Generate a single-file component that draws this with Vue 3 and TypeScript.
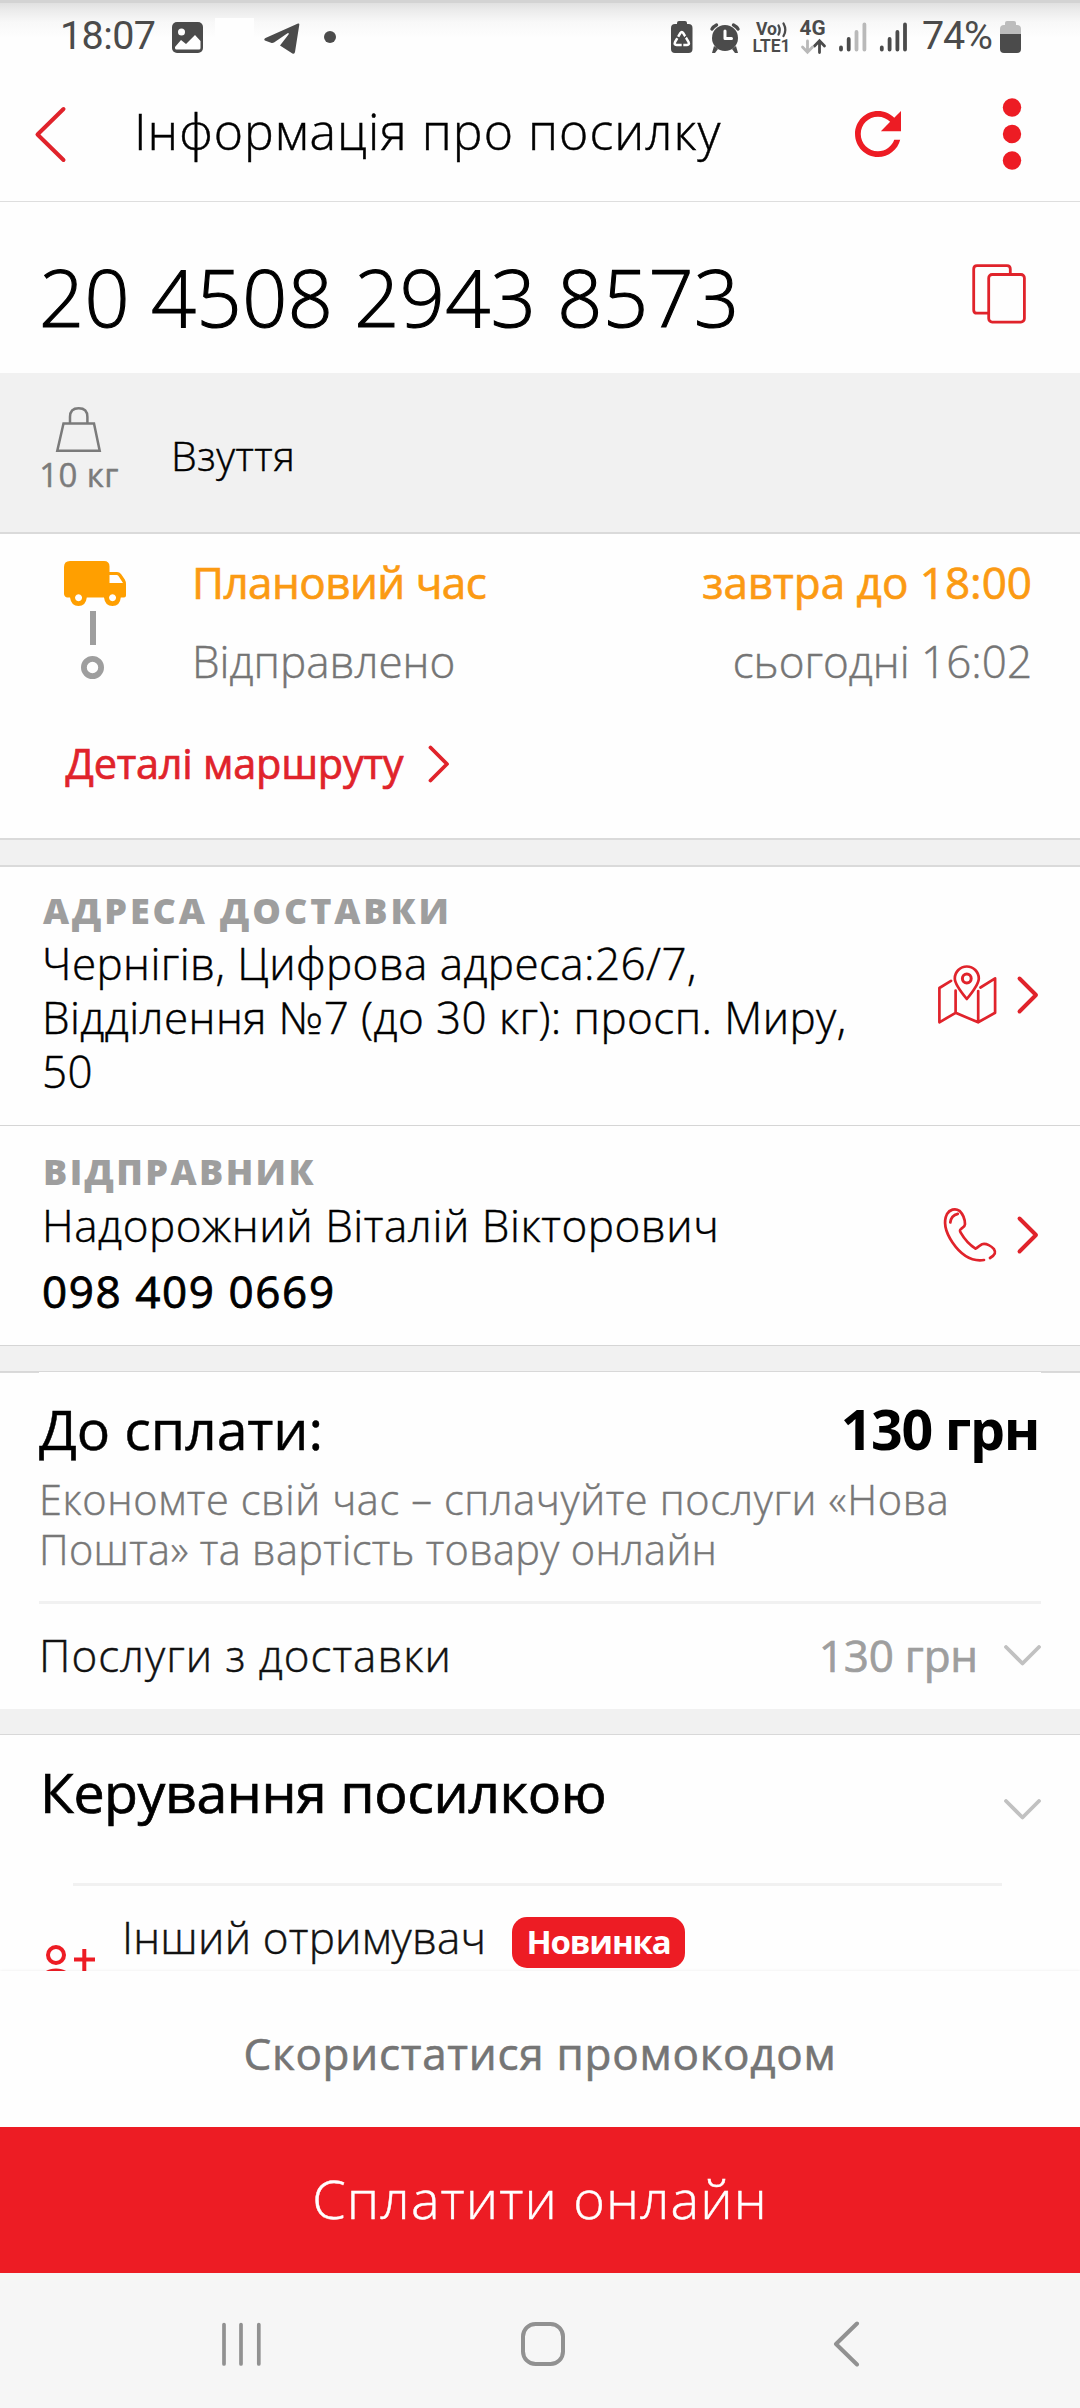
<script setup lang="ts">
interface Party {
  label: string
  lines: string[]
  phone?: string
  kind: 'address' | 'sender'
}

const parcelNumber = '20 4508 2943 8573'

const parties: Party[] = [
  {
    label: 'АДРЕСА ДОСТАВКИ',
    lines: ['Чернігів, Цифрова адреса:26/7,', 'Відділення №7 (до 30 кг): просп. Миру,', '50'],
    kind: 'address',
  },
  {
    label: 'ВІДПРАВНИК',
    lines: ['Надорожний Віталій Вікторович'],
    phone: '098 409 0669',
    kind: 'sender',
  },
]
</script>

<template>
  <div class="screen">
    <div class="status">
      <div class="status-left">
        <span class="clock">18:07</span>
        <svg class="s-gallery" width="32" height="36" viewBox="172 20 32 36">
          <rect x="172" y="22" width="31" height="31" rx="5" fill="#4b4b4b" />
          <circle cx="181.500" cy="32" r="3.500" fill="#fff" />
          <path d="M175 47l6-7 5 4 9-9 5.500 6v7q0 1.500-1.500 1.500H176.500q-1.500 0-1.500-1.500z" fill="#fff" />
        </svg>
        <span class="blank"></span>
        <svg class="s-plane" width="36" height="36" viewBox="264 20 36 36">
          <path d="M298 23.500q1.500-.5 1.300 1.300L295 52q-.5 2.500-2.600 1.400L280 45.500l8.500-11q.8-2-1-1.200L274 42.500q-1.500.8-3 .3l-5.500-2q-2.500-1.200 0-2.700z" fill="#4b4b4b" />
        </svg>
        <svg class="s-dot" width="12" height="36" viewBox="324 20 12 36"><circle cx="330" cy="37" r="6" fill="#4b4b4b" /></svg>
      </div>
      <div class="status-right">
        <svg width="236" height="40" viewBox="671 18 236 40">
          <g fill="#4b4b4b">
            <path d="M677 24V23q0-2 2-2h6q2 0 2 2v1h1.500q4 0 4 4v21q0 4-4 4h-13.500q-4 0-4-4V28q0-4 4-4z" />
            <circle cx="725" cy="38" r="13" />
            <path d="M714 46l4 3-3 4h-3zM736 46l-4 3 3 4h3z" />
          </g>
          <path d="M680.300 33.200q1.500-2.400 3 0l5.300 9q1.200 2.600-1.600 2.800h-10.400q-2.800-.2-1.600-2.800z" fill="none" stroke="#fff" stroke-width="2.500" />
          <path d="M676 36.500l4.500 2.500M687 35.500l-3.500 3.500M682.500 42v5.500" stroke="#4b4b4b" stroke-width="1.600" />
          <path d="M725 31v7.500h6.500" fill="none" stroke="#fff" stroke-width="3" stroke-linecap="round" stroke-linejoin="round" />
          <g fill="none" stroke="#4b4b4b" stroke-width="3.400" stroke-linecap="round">
            <path d="M712 29q1.500-2.500 4.500-4M738 29q-1.500-2.500-4.500-4" />
            <path d="M778.500 25.500q2.400 4.500 0 9M783.500 23.500q3.600 6.500 0 12.500" stroke-width="2.300" />
            <path d="M819.500 52.500V41M814.500 46l5-5.200 5 5.200" stroke-width="2.800" />
            <path d="M807.500 41v10.500M802.500 47l5 5.200 5-5.200" stroke="#b9b9b9" stroke-width="2.800" />
          </g>
          <g font-family="Roboto, sans-serif" font-weight="700" fill="#4b4b4b">
            <text x="756" y="35" font-size="18.500" textLength="21" lengthAdjust="spacingAndGlyphs">Vo</text>
            <text x="752.500" y="52" font-size="17.500" font-weight="600" textLength="38" lengthAdjust="spacingAndGlyphs">LTE1</text>
            <text x="799.500" y="35" font-size="19.500" textLength="26" lengthAdjust="spacingAndGlyphs">4G</text>
          </g>
          <g stroke="#4b4b4b" stroke-width="3.800" stroke-linecap="round">
            <path d="M841 47.500v2M848.700 39v10.500" />
            <path d="M856.500 32v17.500M864.400 24.500v25" stroke="#b9b9b9" />
            <path d="M881.800 47.500v2M889.600 39v10.500M897.400 32v17.500M905 24.500v25" />
          </g>
        </svg>
        <span class="percent">74%</span>
        <svg class="s-batt" width="22" height="36" viewBox="1000 20 22 36">
          <path d="M1005 25v-2q0-2 2-2h7q2 0 2 2v2h1q4 0 4 4v5h-21v-5q0-4 4-4z" fill="#bdbdbd" />
          <path d="M1000 34h21v15q0 4-4 4h-13q-4 0-4-4z" fill="#4b4b4b" />
        </svg>
      </div>
    </div>

    <header class="header">
      <svg class="h-back" width="34" height="60" viewBox="33 105 34 60">
        <path d="M63.500 109L37.500 134.500L63.500 160" fill="none" stroke="#e0232b" stroke-width="4" stroke-linecap="round" stroke-linejoin="round" />
      </svg>
      <h1 class="title">Інформація про посилку</h1>
      <svg class="h-refresh" width="46" height="46" viewBox="4 4 16 16">
        <path fill="#ed1c24" d="M17.650 6.350C16.200 4.900 14.210 4 12 4c-4.420 0-7.990 3.580-7.990 8s3.570 8 7.990 8c3.730 0 6.840-2.550 7.730-6h-2.080c-.82 2.330-3.040 4-5.650 4-3.310 0-6-2.690-6-6s2.690-6 6-6c1.660 0 3.140.69 4.220 1.780L13 11h7V4l-2.350 2.350z" />
      </svg>
      <svg class="h-more" width="20" height="74" viewBox="1002 96.500 20 74">
        <g fill="#ed1c24"><circle cx="1012" cy="107" r="9.200" /><circle cx="1012" cy="133.500" r="9.200" /><circle cx="1012" cy="160" r="9.200" /></g>
      </svg>
    </header>

    <section class="number">
      <span class="number-text">{{ parcelNumber }}</span>
      <svg class="copy" width="56" height="64" viewBox="971 262 56 64">
        <g fill="none" stroke="#e0232b" stroke-width="2.800">
          <path d="M988 313.200h-11q-3.300 0-3.300-3.300V269q0-3.300 3.300-3.300h30q3.300 0 3.300 3.300v5" />
          <rect x="988.700" y="274.500" width="35.700" height="47.600" rx="3.500" />
        </g>
      </svg>
    </section>

    <section class="cargo">
      <div class="weight">
        <svg width="50" height="48" viewBox="54 406 50 48">
          <g fill="none" stroke="#7b7b7b" stroke-width="2.500">
            <path d="M63.500 423.500h30.500l5.700 27.300H57.300z" />
            <path d="M70 423v-6q0-8.700 8.700-8.700t8.700 8.700v6" />
          </g>
        </svg>
        <span class="weight-text">10 кг</span>
      </div>
      <span class="cargo-name">Взуття</span>
    </section>

    <section class="route">
      <div class="route-body">
        <svg class="track" width="64" height="122" viewBox="64 560 64 122">
          <path fill="#ff9f00" fill-rule="evenodd" d="M64 567q0-6 6-6h34q5.500 0 5.500 5.500V572h7.500q2.500 0 4 2l3.800 5.500q1.200 2 1.200 4.500v11.500q0 2-2 2h-3.200q-.8 8.500-8.300 8.500t-8.500-8.500H86.800q-1 8.500-8.300 8.500t-8.500-8.500H67q-3-1-3-4zM109.500 575v8h13.500l-4.500-7q-.7-1-2-1zM78.500 594.200a3.500 3.500 0 1 0 .1 0zM112.500 594.200a3.500 3.500 0 1 0 .1 0z" />
          <rect x="90" y="611" width="6" height="34" fill="#9e9e9e" />
          <circle cx="92.500" cy="667.500" r="8.600" fill="none" stroke="#9e9e9e" stroke-width="5.800" />
        </svg>
        <div class="route-rows">
          <div class="route-row plan">
            <span class="plan-l">Плановий час</span>
            <span class="plan-r">завтра до 18:00</span>
          </div>
          <div class="route-row sent">
            <span>Відправлено</span>
            <span>сьогодні 16:02</span>
          </div>
        </div>
      </div>
      <div class="details">
        <span>Деталі маршруту</span>
        <svg width="22" height="40" viewBox="428 744.500 22 40">
          <path d="M430.500 748L447 764.500L430.500 781" fill="none" stroke="#e0232b" stroke-width="3.800" stroke-linecap="round" stroke-linejoin="round" />
        </svg>
      </div>
    </section>

    <section v-for="p in parties" :key="p.kind" class="party" :class="p.kind">
      <div class="party-text">
        <div class="label">{{ p.label }}</div>
        <div class="party-lines">
          <div v-for="line in p.lines" :key="line">{{ line }}</div>
        </div>
        <div v-if="p.phone" class="phone">{{ p.phone }}</div>
      </div>
      <svg v-if="p.kind === 'address'" class="party-icon" width="62" height="62" viewBox="936 964 62 62">
        <g fill="none" stroke="#e0232b" stroke-width="2.700" stroke-linecap="round" stroke-linejoin="round">
          <path d="M951 980.800l-11.600 7.200v34.300l16.200-9.500 22.500 9.500 17-9.500v-34.500l-14.600 9.200M955.600 990.500v22M978.200 991v31" />
          <path d="M966.800 999q-12-14.500-12-20.500a12 12 0 0 1 24 0q0 6-12 20.500z" />
          <circle cx="966.800" cy="978.500" r="4.400" stroke-width="3" />
        </g>
      </svg>
      <svg v-else class="party-icon" width="62" height="62" viewBox="936 1204 62 62">
        <path d="M984 1260c-12 1.800-23-5-31.500-17.500c-7-10.500-9.500-20.500-5.500-28.500c2.500-4.200 8-6.300 12.500-3.200c3 3 5.500 8.500 5.500 13.500c0 2.500-2.500 3.500-4 4.700c-1.500 1-1.300 1.800-.3 3.600c4 7 8.500 12 14.800 16c2.500-.6 4-3.400 6.500-4.400c4.500-1.200 9.500 2 12 5c2 3 1.500 5.500-4 8.800M950.300 1222.500q.8-7 7.500-8.600" fill="none" stroke="#e0232b" stroke-width="2.700" stroke-linecap="round" stroke-linejoin="round" />
      </svg>
      <svg class="party-chev" width="24" height="62" viewBox="1016 963.500 24 62">
        <path d="M1019.500 978L1036 994.500L1019.500 1011" fill="none" stroke="#e0232b" stroke-width="3.900" stroke-linecap="round" stroke-linejoin="round" />
      </svg>
    </section>

    <section class="payment">
      <div class="pay-head">
        <span class="pay-title">До сплати:</span>
        <span class="pay-sum">130 грн</span>
      </div>
      <p class="pay-note"><span class="note-first">Економте свій час – сплачуйте послуги «Нова</span><br>Пошта» та вартість товару онлайн</p>
      <div class="rule"></div>
      <div class="pay-row">
        <span class="pay-service">Послуги з доставки</span>
        <span class="pay-price">130 грн</span>
        <svg width="37" height="22" viewBox="0 0 37 22"><path d="M2 2l16.500 16.500L35 2" fill="none" stroke="#c1c1c1" stroke-width="3.800" stroke-linecap="round" stroke-linejoin="round" /></svg>
      </div>
    </section>

    <section class="manage">
      <div class="manage-head">
        <span class="manage-title">Керування посилкою</span>
        <svg width="37" height="22" viewBox="0 0 37 22"><path d="M2 2l16.500 16.500L35 2" fill="none" stroke="#c1c1c1" stroke-width="3.800" stroke-linecap="round" stroke-linejoin="round" /></svg>
      </div>
      <div class="manage-rule"></div>
      <div class="manage-row">
        <svg class="person" width="54" height="40" viewBox="44 1943 54 40">
          <g fill="none" stroke="#ed1c24" stroke-width="4">
            <circle cx="56" cy="1955" r="8" />
            <path d="M84.300 1949v22M74 1959.500h21" />
            <path d="M44 1976q3-5.500 12-5.500t12 5.500" />
          </g>
        </svg>
        <span class="recipient">Інший отримувач</span>
        <span class="badge">Новинка</span>
      </div>
    </section>

    <div class="promo"><span>Скористатися промокодом</span></div>
    <button class="pay-btn"><span>Сплатити онлайн</span></button>

    <nav class="nav">
      <svg width="41" height="46" viewBox="221 2321 41 46">
        <path d="M224 2324.500v39.500M241 2324.500v39.500M258.800 2324.500v39.500" stroke="#919191" stroke-width="3.700" stroke-linecap="round" />
      </svg>
      <svg width="46" height="46" viewBox="520 2321 46 46">
        <rect x="523" y="2324" width="40" height="40" rx="12.500" fill="none" stroke="#919191" stroke-width="4" />
      </svg>
      <svg width="28" height="46" viewBox="832 2321 28 46">
        <path d="M857 2323.500L836 2344L857 2364.500" fill="none" stroke="#919191" stroke-width="4" stroke-linecap="round" stroke-linejoin="round" />
      </svg>
    </nav>
  </div>
</template>

<style>
body {
  margin: 0;
  background: #fff;
}
</style>

<style scoped>
.screen {
  width: 1080px;
  height: 2408px;
  overflow: hidden;
  display: flex;
  flex-direction: column;
  background: #fefefe;
  color: #000;
  font-family: "Open Sans", "Noto Sans", sans-serif;
  font-weight: 300;
  -webkit-text-stroke: 0.450px currentColor;
  white-space: nowrap;
}
.screen > * {
  box-sizing: border-box;
  flex-shrink: 0;
}
svg {
  display: block;
  flex-shrink: 0;
}

.status {
  height: 72px;
  padding: 0 58px 0 60px;
  display: flex;
  justify-content: space-between;
  background: linear-gradient(#d3d3d3 0 3px, #e0e0e0 3px, #ececec 11px, #f8f8f8 22px, #fefefe 38px);
  font-family: Roboto, sans-serif;
  font-weight: 400;
  color: #4b4b4b;
  -webkit-text-stroke: 0;
}
.status-left,
.status-right {
  display: flex;
  align-items: flex-start;
}
.clock,
.percent {
  font-size: 39.500px;
  line-height: 46px;
  margin-top: 13px;
}
.clock {
  width: 112px;
  letter-spacing: -0.600px;
}
.s-gallery { margin-top: 20px; }
.blank {
  width: 39px;
  height: 36px;
  margin: 18px 10px 0 11px;
  background: #fefefe;
}
.s-plane { margin-top: 20px; }
.s-dot { margin: 20px 0 0 24px; }
.status-right > svg:first-child { margin-top: 18px; }
.percent {
  width: 77px;
  margin-left: 15px;
  letter-spacing: -1.200px;
}
.status-right > .s-batt { margin: 20px 0 0 1px; }

.header {
  height: 130px;
  padding: 0 58px 0 33px;
  display: flex;
  align-items: flex-start;
  border-bottom: 1px solid #dedede;
}
.h-back { margin-top: 33px; }
.title {
  flex: 1;
  margin: 26px 0 0 67px;
  font-size: 50px;
  line-height: 66px;
  font-weight: 300;
  letter-spacing: 1.020px;
}
.h-refresh { margin-top: 39px; }
.h-more { margin: 25px 0 0 101px; }

.number {
  height: 171px;
  padding: 45px 53px 0 39px;
  display: flex;
  justify-content: space-between;
}
.number-text {
  font-size: 79px;
  line-height: 100px;
  letter-spacing: 0.450px;
  -webkit-text-stroke-width: 1.100px;
}
.copy { margin-top: 15px; }

.cargo {
  height: 161px;
  padding: 33px 39px 0;
  display: flex;
  background: #f1f1f1;
  border-bottom: 2px solid #dadada;
}
.weight {
  width: 80px;
  display: flex;
  flex-direction: column;
  align-items: center;
}
.weight-text {
  font-size: 33px;
  line-height: 42px;
  font-weight: 400;
  letter-spacing: 0.400px;
  color: #7b7b7b;
}
.cargo-name {
  margin: 22px 0 0 52px;
  font-size: 41px;
  line-height: 54px;
  letter-spacing: 0.500px;
}

.route {
  height: 306px;
  padding: 18px 48px 0 64px;
  border-bottom: 2px solid #dadada;
}
.route-body { display: flex; }
.track { margin-top: 8px; }
.route-rows {
  flex: 1;
  margin-left: 64px;
}
.route-row {
  display: flex;
  justify-content: space-between;
  font-size: 44px;
  line-height: 60px;
}
.plan {
  font-weight: 400;
  color: #fb9a13;
  -webkit-text-stroke-width: 0.700px;
}
.plan-l { letter-spacing: -0.550px; }
.sent {
  margin-top: 19px;
  color: #757575;
  letter-spacing: 0;
}
.details {
  margin-top: 44px;
  display: flex;
  align-items: center;
  font-size: 41.500px;
  line-height: 56px;
  font-weight: 400;
  letter-spacing: -0.250px;
  color: #e0232b;
  -webkit-text-stroke-width: 0.700px;
}
.details span {
  width: 362.500px;
  margin-left: 1.500px;
}
.details svg { margin-top: 2px; }

.party {
  display: flex;
  align-items: flex-start;
  padding: 0 40px 0 42px;
  border-bottom: 1px solid #d5d5d5;
}
.address {
  height: 261px;
  margin-top: 25px;
  padding-top: 22px;
  border-top: 2px solid #dadada;
}
.sender {
  height: 220px;
  padding-top: 24px;
}
.party-text { flex: 1; }
.label {
  margin-left: 1px;
  font-size: 36px;
  line-height: 44px;
  font-weight: 800;
  letter-spacing: 2.900px;
  color: #9e9e9e;
  -webkit-text-stroke-width: 0;
}
.sender .label { letter-spacing: 2.400px; }
.party-lines {
  margin-top: 3px;
  font-size: 44px;
  line-height: 54px;
  letter-spacing: 0.420px;
}
.sender .party-lines {
  margin-top: 4px;
  letter-spacing: 0.550px;
}
.phone {
  margin-top: 12px;
  font-size: 44px;
  line-height: 54px;
  font-weight: 400;
  letter-spacing: 1.600px;
  -webkit-text-stroke-width: 0.800px;
}
.address .party-icon { margin-top: 75px; }
.address .party-chev { margin-top: 74.500px; }
.sender .party-icon { margin-top: 54px; }
.sender .party-chev { margin-top: 53.500px; }
.party-chev { margin-left: 18px; }

.payment {
  height: 338px;
  margin-top: 25px;
  padding: 22px 39px 0;
  border-top: 1px solid #d8d8d8;
  background:
    linear-gradient(#dadada, #dadada) left top / 39px 1px no-repeat,
    linear-gradient(#dadada, #dadada) right top / 39px 1px no-repeat,
    #fefefe;
}
.pay-head {
  display: flex;
  justify-content: space-between;
  font-size: 55.500px;
  line-height: 70px;
  font-weight: 400;
}
.pay-title { letter-spacing: -0.150px; }
.pay-sum {
  margin-right: 2px;
  font-weight: 700;
  letter-spacing: -1.400px;
  -webkit-text-stroke-width: 0;
}
.pay-note {
  margin: 10px 0 27px;
  font-size: 41.500px;
  line-height: 50px;
  letter-spacing: 0.320px;
  color: #777;
}
.note-first { letter-spacing: 0.630px; }
.rule {
  height: 3px;
  background: #f1f1f1;
}
.pay-row {
  margin-top: 21px;
  display: flex;
  align-items: center;
  font-size: 44px;
  line-height: 60px;
}
.pay-row svg { margin-top: 2px; }
.pay-service {
  flex: 1;
  letter-spacing: 0.980px;
  color: #111;
}
.pay-price {
  margin-right: 26px;
  font-weight: 400;
  letter-spacing: -0.200px;
  color: #9e9e9e;
  -webkit-text-stroke-width: 0.700px;
}

.manage {
  height: 237px;
  margin-top: 25px;
  border-top: 1px solid #d8d8d8;
  overflow: hidden;
}
.manage-head {
  padding: 22px 39px 0 40px;
  display: flex;
  justify-content: space-between;
  font-size: 55.500px;
  line-height: 70px;
  font-weight: 400;
  letter-spacing: -0.450px;
  -webkit-text-stroke-width: 0.700px;
}
.manage-head svg { margin-top: 42px; }
.manage-rule {
  height: 3px;
  margin: 56px 78px 0 73px;
  background: #f1f1f1;
}
.manage-row {
  padding: 21px 0 0 44px;
  display: flex;
  align-items: flex-start;
  font-size: 44px;
  line-height: 60px;
  color: #111;
}
.person { margin-top: 36px; }
.recipient {
  width: 390px;
  margin-left: 24px;
  letter-spacing: 0.200px;
}
.badge {
  width: 173px;
  height: 51px;
  margin-top: 10px;
  border-radius: 15px;
  background: #ed1c24;
  color: #fff;
  font-size: 33px;
  line-height: 50px;
  font-weight: 700;
  letter-spacing: -1.200px;
  text-align: center;
  -webkit-text-stroke-width: 0;
}

.promo {
  height: 156px;
  padding-top: 52px;
  text-align: center;
  font-size: 44px;
  line-height: 60px;
  font-weight: 400;
  letter-spacing: 0.730px;
  color: #757575;
  background: #fefefe;
  box-shadow: 0 0 3px rgba(0, 0, 0, 0.080);
  -webkit-text-stroke-width: 0.600px;
}
.pay-btn {
  height: 146px;
  padding: 36px 0 0;
  border: 0;
  display: flex;
  justify-content: center;
  align-items: flex-start;
  background: #ed1c24;
  color: #fff;
  font-family: inherit;
  font-size: 54px;
  line-height: 70px;
  font-weight: 300;
  letter-spacing: 1.100px;
  -webkit-text-stroke: 0.450px #fff;
}
.nav {
  height: 135px;
  padding: 48px 220px 0 221px;
  display: flex;
  justify-content: space-between;
  align-items: flex-start;
  background: #f6f6f6;
}
.nav svg:nth-child(2) { margin-left: -8px; }

.address,
.payment,
.manage {
  box-shadow: 0 -25px 0 #f1f1f1;
}
</style>
